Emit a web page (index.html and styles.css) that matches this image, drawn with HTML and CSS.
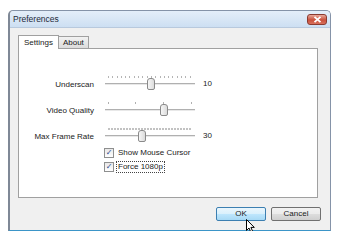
FILE: index.html
```html
<!DOCTYPE html>
<html>
<head>
<meta charset="utf-8">
<link rel="stylesheet" href="styles.css">
</head>
<body>
<div class="window">
  <div class="titlebar">
    <span class="title">Preferences</span>
    <span class="close"><svg width="9" height="7" viewBox="0 0 9 7"><path d="M1.5 0.8 L7.5 6.2 M7.5 0.8 L1.5 6.2" stroke="#fff" stroke-width="1.8"/></svg></span>
  </div>
  <div class="content">
    <div class="tabs">
      <div class="tab active">Settings</div>
      <div class="tab">About</div>
    </div>
    <div class="panel">
      <div class="grid">
        <div class="label">Underscan</div>
        <div class="slider">
          <div class="ticks ticks-dots"></div>
          <div class="track"></div>
          <div class="thumb" style="left:42px"></div>
        </div>
        <div class="value">10</div>

        <div class="label">Video Quality</div>
        <div class="slider">
          <div class="ticks ticks-four"></div>
          <div class="track"></div>
          <div class="thumb" style="left:55px"></div>
        </div>
        <div class="value"></div>

        <div class="label">Max Frame Rate</div>
        <div class="slider">
          <div class="ticks ticks-dense"></div>
          <div class="track"></div>
          <div class="thumb" style="left:33px"></div>
        </div>
        <div class="value">30</div>
      </div>
      <div class="checks">
        <label class="check"><span class="box">&#10003;</span><span class="ctext">Show Mouse Cursor</span></label>
        <label class="check"><span class="box">&#10003;</span><span class="ctext focus">Force 1080p</span></label>
      </div>
    </div>
    <div class="buttons">
      <div class="btn hover">OK</div>
      <div class="btn">Cancel</div>
    </div>
  </div>
  <svg class="cursor" width="10" height="15" viewBox="0 0 10 15"><path d="M0.5 0.5 L0.5 11.5 L3 9 L5 13.5 L6.8 12.7 L4.9 8.4 L8.3 8.4 Z" fill="#fff" stroke="#000" stroke-width="1"/></svg>
</div>
</body>
</html>
```

FILE: styles.css
```css
html, body {
  margin: 0;
  padding: 0;
  background: #ffffff;
}
body {
  font-family: "Liberation Sans", Arial, sans-serif;
  font-size: 8px;
  color: #1a1a1a;
}
.window {
  position: relative;
  margin: 10px 0 0 8px;
  width: 320px;
  height: 219px;
  border: 1px solid #8593a8;
  border-left: 2px solid #7f8896;
  border-bottom: 1px solid #3b95c8;
  border-radius: 5px 5px 0 0;
  background: #f0f0f0;
  display: flex;
  flex-direction: column;
  box-sizing: content-box;
}
.titlebar {
  height: 16px;
  display: flex;
  align-items: center;
  justify-content: space-between;
  padding: 0 3px 0 3px;
  background: linear-gradient(#e4eef9, #cddff2);
  border-radius: 4px 4px 0 0;
  border-bottom: 1px solid #b8c9dd;
}
.title {
  font-size: 8.5px;
  color: #1e2a3a;
}
.close {
  width: 20px;
  height: 11px;
  border: 1px solid #8a3a30;
  border-radius: 3px;
  background: linear-gradient(#e8a89a, #c9503c 55%, #d8705c);
  display: flex;
  align-items: center;
  justify-content: center;
  box-sizing: border-box;
}
.content {
  padding: 6px 8px 0 8px;
  display: flex;
  flex-direction: column;
}
.tabs {
  display: flex;
  align-items: flex-end;
  height: 14px;
}
.tab {
  height: 11px;
  line-height: 11px;
  padding: 0 4px;
  border: 1px solid #a0a0a0;
  border-bottom: none;
  background: linear-gradient(#f2f2f2, #dcdcdc);
  font-size: 8px;
  margin-left: -1px;
}
.tab.active {
  height: 13px;
  line-height: 13px;
  background: #ffffff;
  margin-left: 0;
  margin-bottom: -1px;
  position: relative;
  z-index: 1;
  padding: 0 5px;
}
.panel {
  height: 149px;
  width: 300px;
  border: 1px solid #a0a0a0;
  background: #ffffff;
  padding-top: 26px;
  box-sizing: border-box;
  height: 150px;
}
.grid {
  display: grid;
  grid-template-columns: 75px 90px 20px;
  column-gap: 11px;
  row-gap: 10px;
  align-items: start;
}
.label {
  text-align: right;
  padding-top: 5px;
  line-height: 10px;
}
.value {
  padding-top: 4px;
  line-height: 10px;
  margin-left: -3px;
}
.slider {
  position: relative;
  height: 16px;
}
.ticks {
  position: absolute;
  left: 3px;
  right: 3px;
  top: 1px;
  height: 2px;
}
.ticks-dots {
  background: repeating-linear-gradient(90deg, #b5b5b5 0 1px, transparent 1px 4.3px);
}
.ticks-four {
  background:
    linear-gradient(#b0b0b0, #b0b0b0) 0 0 / 1px 2px no-repeat,
    linear-gradient(#b0b0b0, #b0b0b0) 27px 0 / 1px 2px no-repeat,
    linear-gradient(#b0b0b0, #b0b0b0) 55px 0 / 1px 2px no-repeat,
    linear-gradient(#b0b0b0, #b0b0b0) 83px 0 / 1px 2px no-repeat;
}
.ticks-dense {
  background: repeating-linear-gradient(90deg, #c2c2c2 0 2px, transparent 2px 3px);
}
.track {
  position: absolute;
  left: 0;
  right: 0;
  top: 8px;
  height: 1px;
  background: #b0b0b0;
  border-bottom: 1px solid #e8e8e8;
}
.thumb {
  position: absolute;
  top: 3px;
  width: 6px;
  height: 10px;
  border: 1px solid #8a8a8a;
  border-radius: 3px 3px 2px 2px;
  background: linear-gradient(90deg, #f6f6f6, #dcdcdc);
  box-sizing: content-box;
}
.checks {
  display: flex;
  flex-direction: column;
  padding-left: 85px;
  padding-top: 5px;
  gap: 4px;
}
.check {
  display: flex;
  align-items: center;
  height: 10px;
  gap: 3px;
}
.box {
  width: 8px;
  height: 8px;
  border: 1px solid #8e8f8f;
  background: linear-gradient(#e8e8e8, #ffffff);
  color: #2a4a8a;
  font-size: 8px;
  line-height: 8px;
  text-align: center;
  font-family: "DejaVu Sans", sans-serif;
  box-sizing: content-box;
}
.ctext {
  line-height: 10px;
  padding: 0 1px;
}
.ctext.focus {
  outline: 1px dotted #444;
}
.buttons {
  display: flex;
  justify-content: flex-end;
  gap: 5px;
  margin-top: 9px;
  padding-right: 1px;
}
.btn {
  width: 48px;
  height: 12px;
  line-height: 12px;
  text-align: center;
  border: 1px solid #707070;
  border-radius: 2px;
  background: linear-gradient(#f2f2f2 0%, #ebebeb 50%, #dddddd 51%, #cfcfcf 100%);
  font-size: 8px;
}
.btn.hover {
  border-color: #3c7fb1;
  background: linear-gradient(#eaf6fd 0%, #d9f0fc 50%, #bee6fd 51%, #a7d9f5 100%);
}
.cursor {
  position: absolute;
  left: 236px;
  top: 208px;
}
```
